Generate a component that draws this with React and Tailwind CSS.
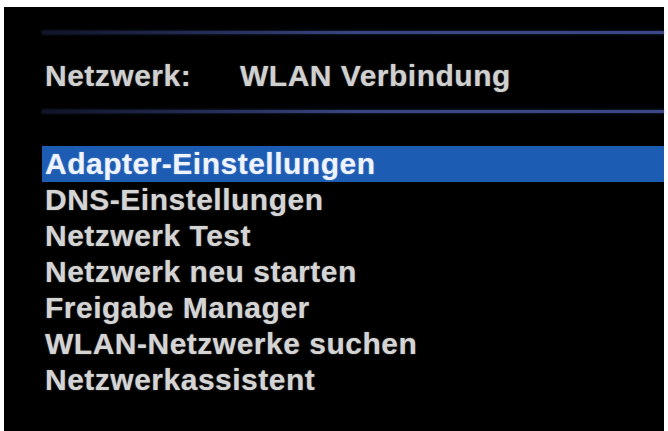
import React from "react";

const items = [
  "Adapter-Einstellungen",
  "DNS-Einstellungen",
  "Netzwerk Test",
  "Netzwerk neu starten",
  "Freigabe Manager",
  "WLAN-Netzwerke suchen",
  "Netzwerkassistent",
];

function Rule() {
  return (
    <div className="h-[3px] w-full bg-gradient-to-r from-[#10142a] via-[#384682] to-[#3b4888] shadow-[0_0_3px_rgba(70,90,170,0.5)]" />
  );
}

export default function App() {
  return (
    <div
      className="w-[668px] h-[431px] bg-white pt-[7px] px-[4px] overflow-hidden"
      style={{ fontFamily: '"Liberation Sans", Arial, sans-serif' }}
    >
      <div className="h-[424px] bg-black pl-[38px] pt-[24px] [text-shadow:0_0_1.5px_rgba(255,255,255,0.45)]">
        <Rule />
        <div className="mt-[24px] h-[36px] flex items-center text-[30px] font-bold leading-[36px] tracking-[0.5px] text-[#d0d0d0]">
          <span className="w-[198px] pl-[3px]">Netzwerk:</span>
          <span>WLAN Verbindung</span>
        </div>
        <div className="mt-[16px]">
          <Rule />
        </div>
        <ul className="mt-[33px] flex flex-col">
          {items.map((t, i) => (
            <li
              key={t}
              className={
                i === 0
                  ? "h-[36px] pl-[3px] bg-[#1d5cb3] text-[30px] font-bold leading-[36px] tracking-[0.5px] text-[#eef4ff]"
                  : "h-[36px] pl-[3px] text-[30px] font-bold leading-[36px] tracking-[0.5px] text-[#d4d4d4]"
              }
            >
              {t}
            </li>
          ))}
        </ul>
      </div>
    </div>
  );
}
